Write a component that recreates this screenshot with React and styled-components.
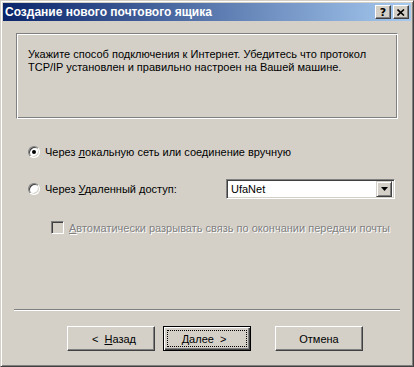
import React from "react";
import styled, { createGlobalStyle } from "styled-components";

const Global = createGlobalStyle`
  html, body {
    margin: 0;
    padding: 0;
    background: #d4d0c8;
  }
  body {
    font-family: "Liberation Sans", Arial, sans-serif;
    font-size: 11px;
    color: #000;
  }
`

const Window = styled.div`
  width: 414px;
  height: 367px;
  box-sizing: border-box;
  background: #d4d0c8;
  border-top: 1px solid #d4d0c8;
  border-left: 1px solid #d4d0c8;
  border-right: 1px solid #404040;
  border-bottom: 1px solid #404040;
  box-shadow: inset 1px 1px #ffffff, inset -1px -1px #808080;
  padding: 2px;
  display: flex;
  flex-direction: column;
`

const TitleBar = styled.div`
  height: 18px;
  flex-shrink: 0;
  background: linear-gradient(to right, #0a246a, #a6caf0);
  display: flex;
  align-items: center;
  padding: 0 2px 0 2px;
`

const Title = styled.div`
  flex: 1;
  color: #fff;
  font-family: "Liberation Sans", Arial, sans-serif;
  font-weight: bold;
  font-size: 12px;
`

const CaptionButton = styled.div`
  width: 16px;
  height: 14px;
  box-sizing: border-box;
  background: #d4d0c8;
  border-top: 1px solid #ffffff;
  border-left: 1px solid #ffffff;
  border-right: 1px solid #404040;
  border-bottom: 1px solid #404040;
  box-shadow: inset -1px -1px #808080;
  margin-left: ${p => p.$gap || 0}px;
  display: flex;
  align-items: center;
  justify-content: center;
  font-family: "DejaVu Sans", sans-serif;
  font-weight: bold;
  font-size: 11px;
  line-height: 1;
`

const Body = styled.div`
  flex: 1;
  display: flex;
  flex-direction: column;
  padding: 12px 13px 0 13px;
`

const InfoPanel = styled.div`
  height: 86px;
  box-sizing: border-box;
  border-top: 1px solid #808080;
  border-left: 1px solid #808080;
  border-right: 1px solid #ffffff;
  border-bottom: 1px solid #ffffff;
  box-shadow: inset 1px 1px #ffffff, inset -1px -1px #808080;
  padding: 14px 11px;
  line-height: 13px;
`

const Options = styled.div`
  display: flex;
  flex-direction: column;
  padding: 26px 0 0 12px;
`

const Row = styled.div`
  display: flex;
  align-items: center;
  height: ${p => p.$h || 13}px;
  margin-top: ${p => p.$mt || 0}px;
  padding-left: ${p => p.$indent || 0}px;
`

const Radio = styled.span`
  width: 12px;
  height: 12px;
  box-sizing: border-box;
  border-radius: 50%;
  background: #fff;
  border: 1px solid;
  border-color: #808080 #ffffff #ffffff #808080;
  box-shadow: inset 1px 1px #404040, inset -1px -1px #d4d0c8;
  display: flex;
  align-items: center;
  justify-content: center;
  margin-right: 5px;
  flex-shrink: 0;

  &::after {
    content: "";
    width: 4px;
    height: 4px;
    border-radius: 50%;
    background: ${p => (p.$checked ? "#000" : "transparent")};
  }
`

const Label = styled.span`
  white-space: nowrap;
  color: ${p => (p.$disabled ? "#808080" : "#000")};
  text-shadow: ${p => (p.$disabled ? "1px 1px #ffffff" : "none")};
  width: ${p => (p.$w ? p.$w + "px" : "auto")};
  flex-shrink: 0;
`

const Key = styled.u`
  text-decoration: underline;
`

const Combo = styled.div`
  width: 169px;
  height: 20px;
  box-sizing: border-box;
  background: #fff;
  border: 1px solid;
  border-color: #808080 #ffffff #ffffff #808080;
  box-shadow: inset 1px 1px #404040, inset -1px -1px #d4d0c8;
  display: flex;
  align-items: center;
  padding: 2px;
`

const ComboText = styled.span`
  flex: 1;
  padding-left: 2px;
`

const ComboButton = styled.span`
  width: 16px;
  height: 16px;
  box-sizing: border-box;
  background: #d4d0c8;
  border-top: 1px solid #d4d0c8;
  border-left: 1px solid #d4d0c8;
  border-right: 1px solid #404040;
  border-bottom: 1px solid #404040;
  box-shadow: inset 1px 1px #ffffff, inset -1px -1px #808080;
  display: flex;
  align-items: center;
  justify-content: center;
`

const Check = styled.span`
  width: 13px;
  height: 13px;
  box-sizing: border-box;
  background: #d4d0c8;
  border: 1px solid;
  border-color: #808080 #ffffff #ffffff #808080;
  box-shadow: inset 1px 1px #404040, inset -1px -1px #d4d0c8;
  margin-right: 5px;
  flex-shrink: 0;
`

const Spacer = styled.div`
  flex: 1;
`

const Separator = styled.div`
  margin: 0 -2px;
  height: 0;
  border-top: 1px solid #808080;
  border-bottom: 1px solid #ffffff;
`

const ButtonRow = styled.div`
  display: flex;
  padding: 15px 0 13px 51px;
`

const Button = styled.div`
  width: 88px;
  height: 25px;
  box-sizing: border-box;
  margin-left: ${p => p.$gap || 0}px;
  background: #d4d0c8;
  border-top: 1px solid ${p => (p.$default ? "#000" : "#fff")};
  border-left: 1px solid ${p => (p.$default ? "#000" : "#fff")};
  border-right: 1px solid ${p => (p.$default ? "#000" : "#404040")};
  border-bottom: 1px solid ${p => (p.$default ? "#000" : "#404040")};
  box-shadow: ${p =>
    p.$default
      ? "inset 1px 1px #fff, inset -1px -1px #404040, inset -2px -2px #808080"
      : "inset -1px -1px #808080"};
  display: flex;
  align-items: center;
  justify-content: center;
  padding: ${p => (p.$default ? "3px" : "0")};
`

const Focus = styled.div`
  flex: 1;
  align-self: stretch;
  border: 1px dotted #000;
  display: flex;
  align-items: center;
  justify-content: center;
`

const Arrow = styled.span`
  margin: 0 ${p => p.$m || 0}px;
`

const App = () => {
    return (
        <>
            <Global />
            <Window>
                <TitleBar>
                    <Title>Создание нового почтового ящика</Title>
                    <CaptionButton>?</CaptionButton>
                    <CaptionButton $gap={2}>
                        <svg width="8" height="7" viewBox="0 0 8 7">
                            <path d="M0.5 0.5 L7 6.5 M7 0.5 L0.5 6.5" stroke="#000" strokeWidth="1.6" />
                        </svg>
                    </CaptionButton>
                </TitleBar>
                <Body>
                    <InfoPanel>
                        Укажите способ подключения к Интернет. Убедитесь что протокол<br />
                        TCP/IP установлен и правильно настроен на Вашей машине.
                    </InfoPanel>
                    <Options>
                        <Row>
                            <Radio $checked />
                            <Label>Через <Key>л</Key>окальную сеть или соединение вручную</Label>
                        </Row>
                        <Row $h={20} $mt={21}>
                            <Radio />
                            <Label $w={181}>Через <Key>У</Key>даленный доступ:</Label>
                            <Combo>
                                <ComboText>UfaNet</ComboText>
                                <ComboButton>
                                    <svg width="7" height="4" viewBox="0 0 7 4">
                                        <path d="M0 0 H7 L3.5 4 Z" fill="#000" />
                                    </svg>
                                </ComboButton>
                            </Combo>
                        </Row>
                        <Row $mt={22} $indent={23}>
                            <Check />
                            <Label $disabled><Key>А</Key>втоматически разрывать связь по окончании передачи почты</Label>
                        </Row>
                    </Options>
                    <Spacer />
                    <Separator />
                    <ButtonRow>
                        <Button>
                            <Arrow $m={6}>&lt;</Arrow><Key>Н</Key>азад
                        </Button>
                        <Button $gap={8} $default>
                            <Focus>
                                <Key>Д</Key>алее<Arrow $m={6}>&gt;</Arrow>
                            </Focus>
                        </Button>
                        <Button $gap={24}>Отмена</Button>
                    </ButtonRow>
                </Body>
            </Window>
        </>
    )
}

export default App
